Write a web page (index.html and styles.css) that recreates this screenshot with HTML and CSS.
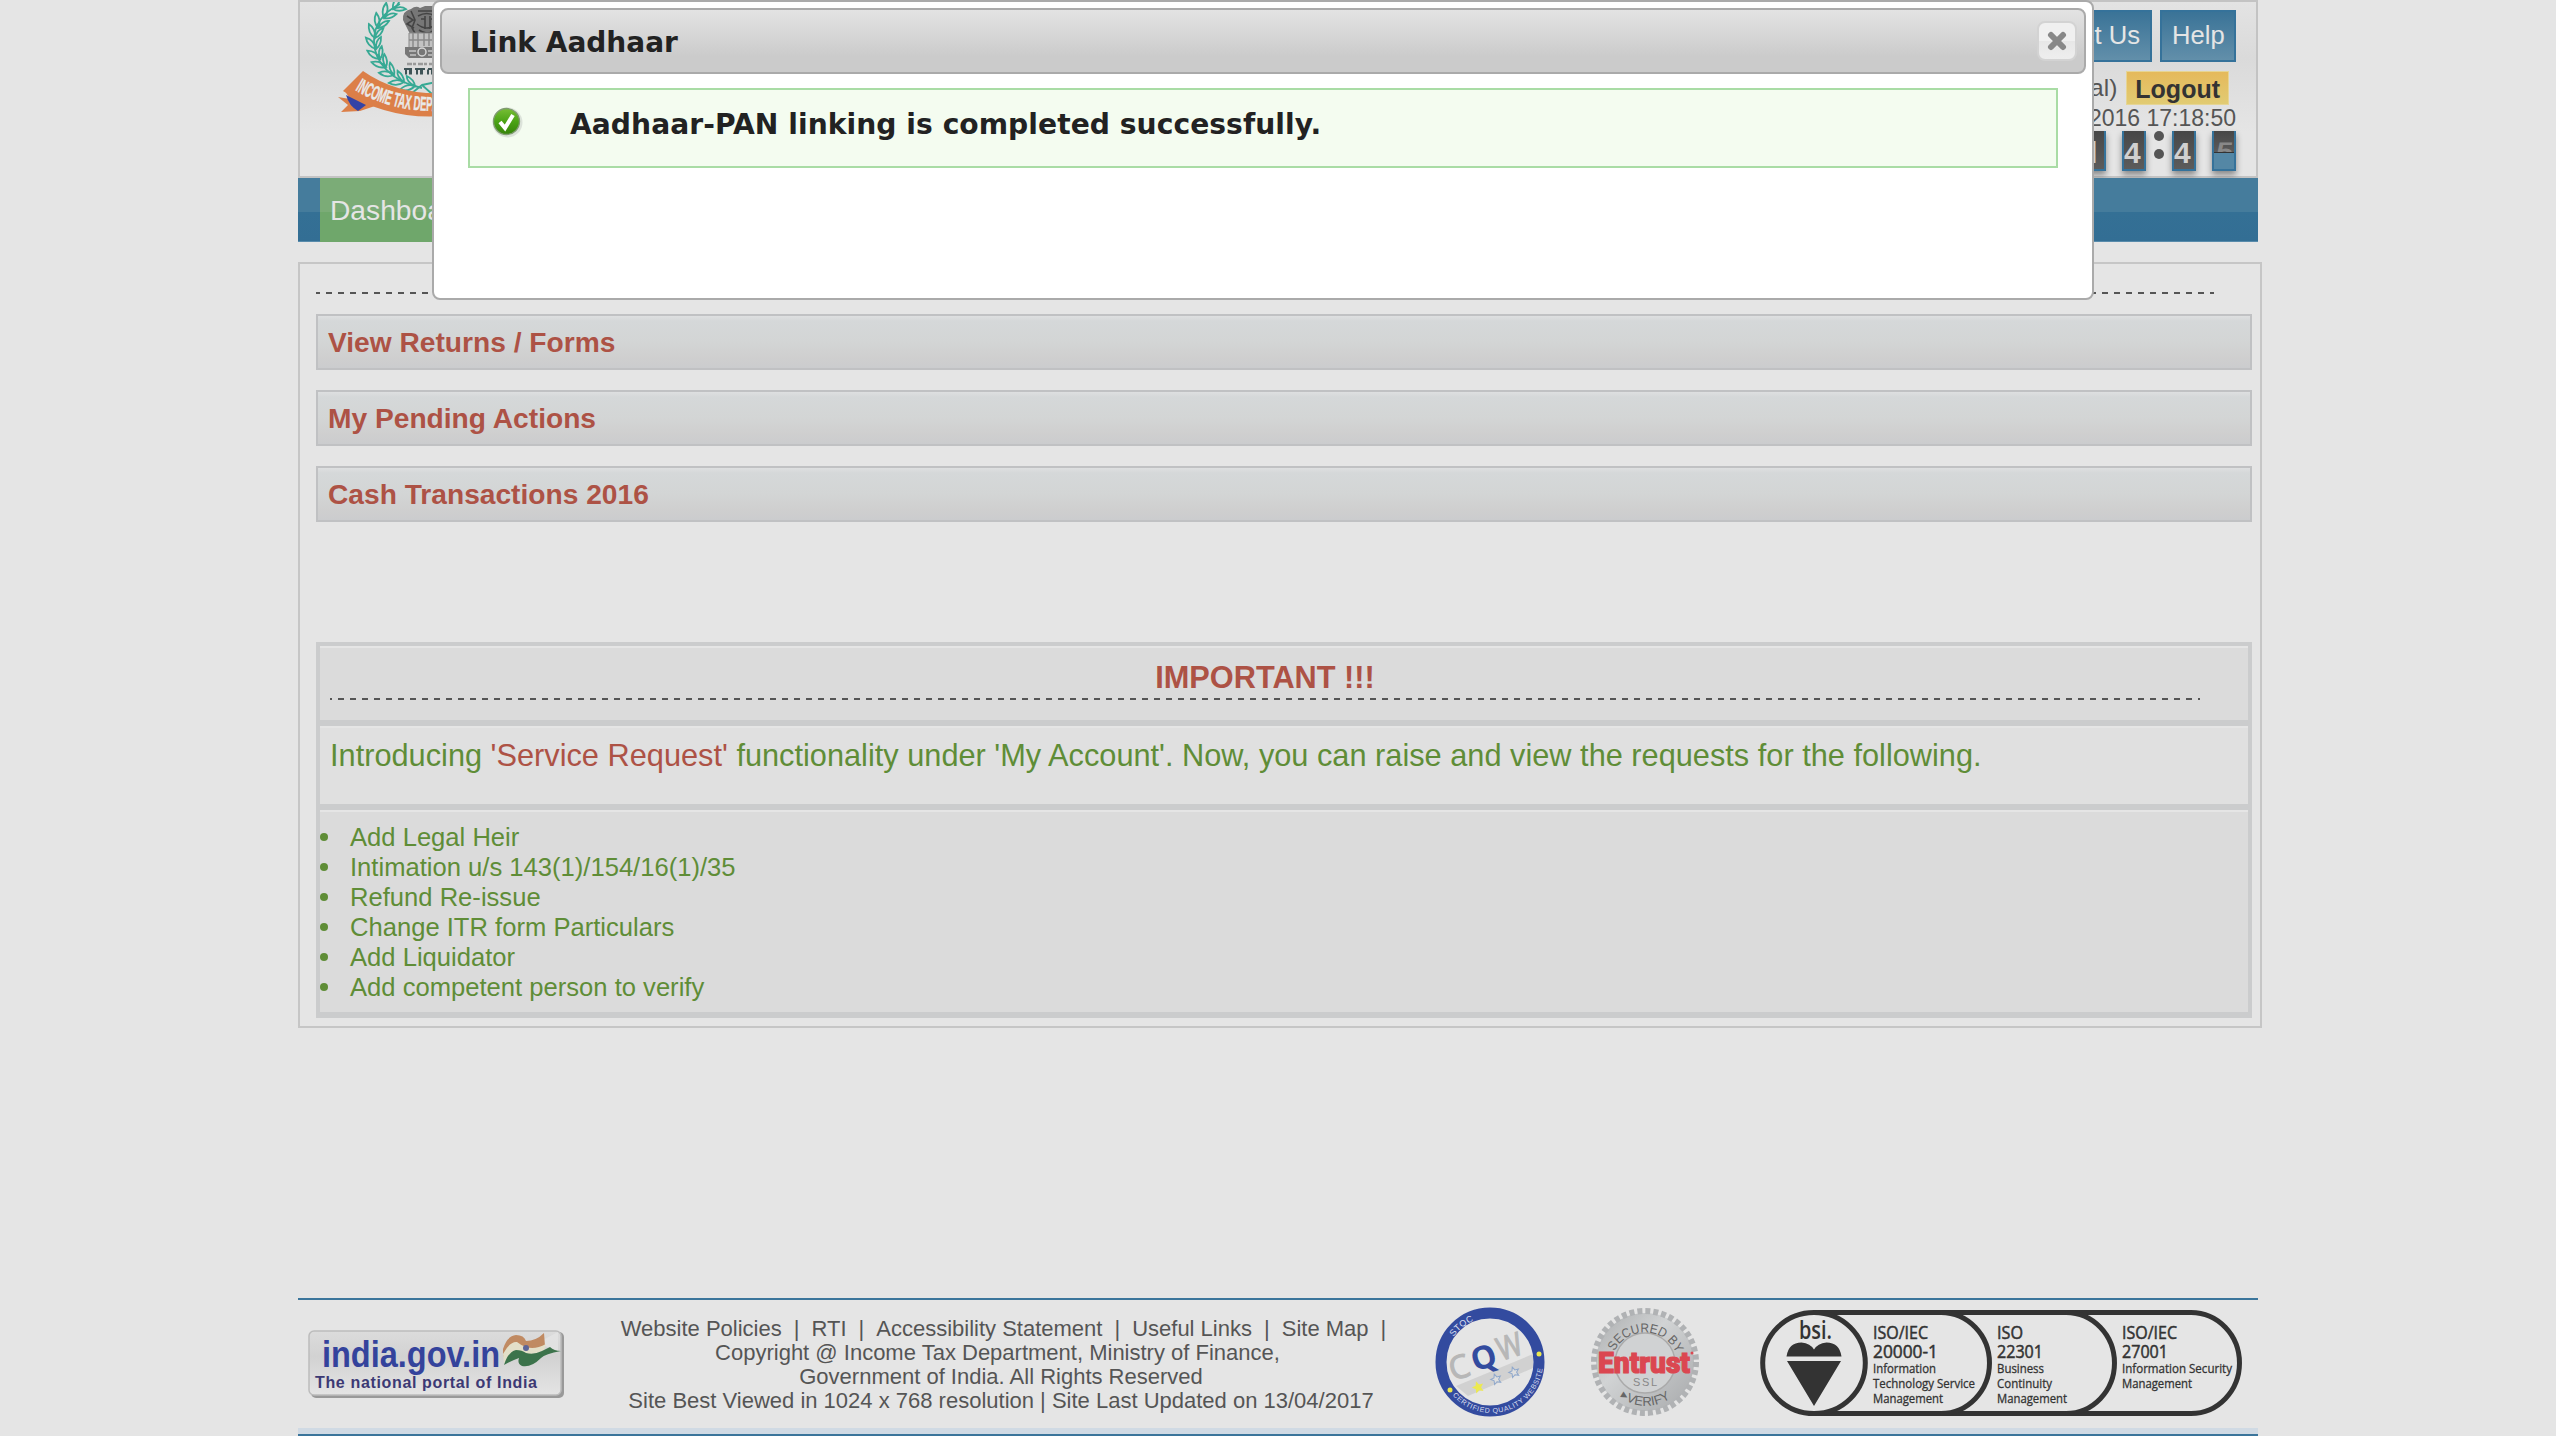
FILE: index.html
```html
<!DOCTYPE html>
<html lang="en">
<head>
<meta charset="utf-8">
<title>Link Aadhaar</title>
<link rel="stylesheet" href="styles.css">
</head>
<body>
<div class="page">
  <header class="header">
    <svg class="emblem" width="190" height="120" viewBox="0 0 190 120">
      <defs>
        <path id="ribbon-text" d="M17 88Q52 109 96 109Q125 109 155 101"/>
        <g id="leaf"><path d="M0 0Q-8 -4 -8 -13Q0 -9 0 0ZM0 0Q6 -3 7 -11Q1 -9 0 0Z"/></g>
      </defs>
      <g class="wreath">
        <path d="M84 86C54 80 36 60 36 39C36 21 46 10 62 2"/>
        <use href="#leaf" transform="translate(77 84) rotate(-72)"/>
        <use href="#leaf" transform="translate(66 80) rotate(-62)"/>
        <use href="#leaf" transform="translate(56 73) rotate(-50)"/>
        <use href="#leaf" transform="translate(48 65) rotate(-40)"/>
        <use href="#leaf" transform="translate(42 57) rotate(-25)"/>
        <use href="#leaf" transform="translate(38 47) rotate(-10)"/>
        <use href="#leaf" transform="translate(37 36) rotate(8)"/>
        <use href="#leaf" transform="translate(40 26) rotate(25)"/>
        <use href="#leaf" transform="translate(46 16) rotate(40)"/>
        <use href="#leaf" transform="translate(55 7) rotate(58)"/>
        <path d="M74 91L84 83L94 92M84 83L108 78"/>
      </g>
      <g class="lions">
        <path fill="#777" d="M73 7q5-4 9-1l5-2h7l5 2q8-1 10 5v8l-4 12-6 5H75l-4-6-6-12q-1-9 8-11z"/>
        <path fill="none" stroke="#444" stroke-width="1.6" d="M73 9l4 9-3 8 4 7M80 9h17M80 14q9-5 17 0M83 17h4m6 0h4M79 22q10 8 19 0M81 28q8 6 15 0M87 14v13M92 14v13M102 10l-4 10 4 10M69 14l6 4-6 4 7 4"/>
        <path fill="#c2c2c2" stroke="#888" d="M71 31h32v15H71z"/>
        <path fill="none" stroke="#8a8a8a" stroke-width="1.5" d="M75 31v14m5-14v14m6-14v13m5-13v13m5-13v14M71 38h32"/>
        <path fill="#777" d="M67 45h40l-1 11H71l-4-4z"/>
        <circle cx="84" cy="50" r="4" fill="none" stroke="#d5d5d5" stroke-width="1.5"/>
        <path stroke="#c5c5c5" stroke-width="1.5" d="M71 49h7m12 0h9M72 53h6m12 0h8"/>
        <path stroke="#999" stroke-width="2.500" stroke-dasharray="5 1 3 2" d="M69 62h36"/>
        <path stroke="#3f5356" stroke-width="2" stroke-dasharray="8 3 10 3" d="M66 67h40"/>
        <path stroke="#3f5356" stroke-width="5" stroke-dasharray="2 2 3 4" d="M67 70h40"/>
      </g>
      <path fill="#dc7f48" d="M0 95l12 2-5-8 33 14-18 6-19 1 7-7z"/>
      <path fill="#3443a5" d="M8 93l20 10-8 6q-9-5-12-16z"/>
      <path fill="#dc7f48" d="M5 89L25 69Q75 104 150 84L155 104Q70 131 5 89z"/>
      <text class="ribbon-label"><textPath href="#ribbon-text" textLength="108" lengthAdjust="spacingAndGlyphs">INCOME TAX DEPARTM</textPath></text>
    </svg>
    <div class="account">
      <div class="top-links"><a class="top-link">Contact Us</a><a class="top-link help">Help</a></div>
      <div class="user-line"><span>(Individual)</span><a class="logout">Logout</a></div>
      <div class="timestamp">2016 17:18:50</div>
      <svg class="countdown" width="160" height="50" viewBox="0 0 160 50">
        <defs>
          <linearGradient id="flap" x1="0" y1="0" x2="0" y2="1"><stop offset="0" stop-color="#474747"/><stop offset="1" stop-color="#5c5c5c"/></linearGradient>
        </defs>
        <g class="flap"><rect x="1" y="1" width="24" height="40"/><rect x="41" y="1" width="24" height="40"/><rect x="91" y="1" width="24" height="40"/><rect x="131" y="1" width="24" height="40"/></g>
        <g fill="url(#flap)"><rect x="3" y="1" width="20" height="38"/><rect x="43" y="1" width="20" height="38"/><rect x="93" y="1" width="20" height="38"/><rect x="133" y="1" width="20" height="22"/></g>
        <path fill="#5487a5" d="M133 23h20v16h-20z"/>
        <path stroke="#333" d="M133 22.5h20"/>
        <g fill="#555"><circle cx="78" cy="6" r="5"/><circle cx="78" cy="24" r="5"/></g>
        <g class="digits"><text class="digit-one" x="2" y="33">1</text><text x="43" y="33">4</text><text x="93" y="33">4</text></g>
        <svg x="131" y="1" width="24" height="21"><text class="digit-flip" transform="translate(3 29) skewX(-8) scale(1 .85)">5</text></svg>
      </svg>
    </div>
  </header>
  <nav class="nav"><a class="nav-item">Dashboard</a></nav>

  <main class="panel">
    <div class="dashes"></div>
    <section class="bar">View Returns / Forms</section>
    <section class="bar">My Pending Actions</section>
    <section class="bar">Cash Transactions 2016</section>
    <div class="notice">
      <div class="notice-row notice-head"><h2>IMPORTANT !!!</h2><div class="dashes"></div></div>
      <div class="notice-row notice-intro">Introducing <span class="hot">'Service Request'</span> functionality under 'My Account'. Now, you can raise and view the requests for the following.</div>
      <ul class="notice-row notice-list">
        <li>Add Legal Heir</li>
        <li>Intimation u/s 143(1)/154/16(1)/35</li>
        <li>Refund Re-issue</li>
        <li>Change ITR form Particulars</li>
        <li>Add Liquidator</li>
        <li>Add competent person to verify</li>
      </ul>
    </div>
  </main>

  <footer class="footer">
    <svg class="portal" width="258" height="70" viewBox="0 0 258 70">
      <defs><linearGradient id="plate" x1="0" y1="0" x2="0" y2="1"><stop offset="0" stop-color="#dcdcdc"/><stop offset=".4" stop-color="#d2d2d2"/><stop offset="1" stop-color="#e4e4e4"/></linearGradient></defs>
      <rect x="4" y="3" width="253" height="66" rx="5" fill="#999"/>
      <rect x="2" y="2" width="252" height="64" rx="5" fill="url(#plate)" stroke="#bcbcbc" stroke-width="1.5"/>
      <path fill="#e6e6e6" d="M230 14L251 3V22z" opacity=".7"/>
      <path fill="#c08a62" d="M196 20q4-13 13-14q8 0 10 6q10 0 18-8l1 13q-11 6-21 3q-7-5-12-2q-4 3-9 10z"/>
      <path fill="#e3dfc8" d="M196 25q7-13 14-12q5 4 9 5q9 3 20-3l-2 6q-12 6-20 3q-8-3-20 10z"/>
      <path fill="#3c734b" d="M197 36q4-13 12-15q6 0 10 3q8 2 16-2l8-4q4 4 11 4q-16 3-20 7q-10 10-19 8q-5-2-3-8q-6 2-15 7z"/>
      <circle cx="219" cy="19" r="3" fill="#5c6599"/>
      <text class="portal-name" x="15" y="38" textLength="178" lengthAdjust="spacingAndGlyphs">india.gov.in</text>
      <text class="portal-tag" x="8" y="59" textLength="222" lengthAdjust="spacing">The national portal of India</text>
    </svg>
    <div class="legal">
      <div class="legal-links"><a>Website Policies</a><i>|</i><a>RTI</a><i>|</i><a>Accessibility Statement</a><i>|</i><a>Useful Links</a><i>|</i><a>Site Map</a><i>|</i></div>
      <div class="legal-copy">Copyright @ Income Tax Department, Ministry of Finance,</div>
      <div>Government of India. All Rights Reserved</div>
      <div>Site Best Viewed in 1024 x 768 resolution | Site Last Updated on 13/04/2017</div>
    </div>
    <svg class="cqw" width="112" height="112" viewBox="0 0 112 112">
      <defs>
        <path id="cqw-top" d="M11.500 50A46.500 46.500 0 0 1 96 32"/>
        <path id="cqw-bottom" d="M16 86A51.500 51.500 0 0 0 109 54"/>
        <path id="star" d="M0-6l1.800 4 4.200.4-3.200 2.900 1 4.300L0 3.400-3.800 5.600l1-4.300L-6-1.600l4.200-.4z"/>
      </defs>
      <circle cx="56" cy="56" r="49" fill="#e5e5e5" stroke="#334b9f" stroke-width="11"/>
      <path d="M22 80L99 48v14L34 90z" fill="#d1d1d1"/>
      <g class="cqw-letters"><text transform="translate(19 75) rotate(-18)" fill="#b7b7b7">C</text><text transform="translate(41 66) rotate(-18)" fill="#334b9f" class="cqw-q">Q</text><text transform="translate(67 55) rotate(-18)" fill="#b7b7b7" textLength="25" lengthAdjust="spacingAndGlyphs">W</text></g>
      <use href="#star" transform="translate(44 81) rotate(-20)" fill="#ece94f"/>
      <g fill="#dedede" stroke="#8fa8cc" stroke-width="1.200"><use href="#star" transform="translate(62 73) rotate(-20) scale(.85)"/><use href="#star" transform="translate(80 66) rotate(-20) scale(.85)"/></g>
      <circle cx="16" cy="84" r="2.500" fill="#ece94f"/><circle cx="105" cy="48" r="2.500" fill="#ece94f"/>
      <text class="ring"><textPath href="#cqw-top" startOffset="21" textLength="26">STQC</textPath></text>
      <text class="ring ring-small"><textPath href="#cqw-bottom" startOffset="4" textLength="118">CERTIFIED QUALITY WEBSITE</textPath></text>
    </svg>
    <svg class="entrust" width="112" height="112" viewBox="0 0 112 112">
      <defs>
        <linearGradient id="silver" x1="0" y1="0" x2="1" y2="1"><stop offset="0" stop-color="#aaacae"/><stop offset=".4" stop-color="#d1d3d4"/><stop offset="1" stop-color="#a7a9ab"/></linearGradient>
        <path id="ent-top" d="M24 49A34 34 0 0 1 88 49"/>
        <path id="ent-bottom" d="M27 88A44 44 0 0 0 87 88"/>
      </defs>
      <circle cx="56" cy="56" r="49" fill="url(#silver)"/>
      <circle cx="56" cy="56" r="51" fill="none" stroke="#b0b2b4" stroke-width="6" stroke-dasharray="5 3.010"/>
      <circle cx="56" cy="57" r="30" fill="#d0d2d3" stroke="#aaa" stroke-width="1.500"/>
      <text class="seal"><textPath href="#ent-top" startOffset="4" textLength="77" lengthAdjust="spacingAndGlyphs">SECURED BY</textPath></text>
      <text class="seal"><textPath href="#ent-bottom" startOffset="5" textLength="54" lengthAdjust="spacingAndGlyphs">▸VERIFY</textPath></text>
      <text class="ent-name" x="9" y="67" textLength="92" lengthAdjust="spacingAndGlyphs">Entrust</text>
      <text class="ent-ssl" x="44" y="80" textLength="24">SSL</text>
      <circle cx="103" cy="47" r="1.500" fill="#db4751"/>
    </svg>
    <svg class="bsi" width="488" height="116" viewBox="0 0 488 116">
      <g fill="none" stroke="#333" stroke-width="5">
        <path d="M57 5.500H434A48.500 50.500 0 0 1 434 106.500H57"/>
        <ellipse cx="57" cy="56" rx="51.300" ry="50.500"/>
        <path d="M184 5.500A48.500 50.500 0 0 1 184 106.500M309 5.500A48.500 50.500 0 0 1 309 106.500"/>
      </g>
      <path fill="#333" d="M29.500 49.500q2-14 15-14q9 1 12.500 7q3.500-6 12.500-7q13 0 15 14zM30 54h54L57 99z"/>
      <text class="bsi-name" x="42" y="32" textLength="33" lengthAdjust="spacingAndGlyphs">bsi.</text>
      <g class="iso">
        <text x="116" y="32" textLength="55" lengthAdjust="spacingAndGlyphs">ISO/IEC</text><text x="116" y="51" textLength="65" lengthAdjust="spacingAndGlyphs">20000-1</text>
        <text x="240" y="32" textLength="26" lengthAdjust="spacingAndGlyphs">ISO</text><text x="240" y="51" textLength="46" lengthAdjust="spacingAndGlyphs">22301</text>
        <text x="365" y="32" textLength="55" lengthAdjust="spacingAndGlyphs">ISO/IEC</text><text x="365" y="51" textLength="46" lengthAdjust="spacingAndGlyphs">27001</text>
      </g>
      <g class="iso-sub">
        <text x="116" y="66" textLength="63" lengthAdjust="spacingAndGlyphs">Information</text><text x="116" y="81" textLength="102" lengthAdjust="spacingAndGlyphs">Technology Service</text><text x="116" y="96" textLength="70" lengthAdjust="spacingAndGlyphs">Management</text>
        <text x="240" y="66" textLength="47" lengthAdjust="spacingAndGlyphs">Business</text><text x="240" y="81" textLength="55" lengthAdjust="spacingAndGlyphs">Continuity</text><text x="240" y="96" textLength="70" lengthAdjust="spacingAndGlyphs">Management</text>
        <text x="365" y="66" textLength="110" lengthAdjust="spacingAndGlyphs">Information Security</text><text x="365" y="81" textLength="70" lengthAdjust="spacingAndGlyphs">Management</text>
      </g>
    </svg>
  </footer>
</div>

<div class="dialog" role="dialog">
  <div class="dialog-title"><span>Link Aadhaar</span>
    <button class="close" aria-label="Close"><svg width="20" height="20" viewBox="0 0 20 20"><path d="M4 4L16 16M16 4L4 16" stroke="#888" stroke-width="6" stroke-linecap="round"/></svg></button>
  </div>
  <div class="success">
    <svg width="32" height="32" viewBox="0 0 32 32">
      <defs><linearGradient id="ball" x1="0" y1="0" x2="0" y2="1"><stop offset="0" stop-color="#77be35"/><stop offset=".5" stop-color="#4ba315"/><stop offset="1" stop-color="#358309"/></linearGradient></defs>
      <circle cx="16.500" cy="16.500" r="15" fill="#dce3da"/><circle cx="15.500" cy="15.500" r="13" fill="url(#ball)" stroke="#7f9b70" stroke-width="1.300"/>
      <path d="M9 16l5 6 8-13" fill="none" stroke="#fff" stroke-width="4"/>
    </svg>
    <p>Aadhaar-PAN linking is completed successfully.</p>
  </div>
</div>
</body>
</html>
```

FILE: styles.css
```css
* { box-sizing: border-box; }
body { margin: 0; background: #e5e5e5; color: #555; font-family: "Liberation Sans", Arial, sans-serif; overflow: hidden; }
.page { width: 1964px; height: 1436px; margin-left: 298px; display: flex; flex-direction: column; }

.header { width: 1960px; height: 178px; border: 2px solid #c3c3c3; background: linear-gradient(#e3e3e3, #dadada 32%, #e5e5e5 75%); display: flex; justify-content: space-between; padding-left: 38px; padding-right: 20px; }
.account { display: flex; flex-direction: column; align-items: flex-end; }
.top-links { display: flex; gap: 8px; margin-top: 8px; }
.top-link { height: 52px; padding: 0 10px; border: 2px solid #35729a; background: linear-gradient(#3a7397, #628faa); color: #e5e5e5; font-size: 25.6px; line-height: 47px; }
.help { width: 76px; }
.user-line { display: flex; align-items: center; gap: 9px; margin-top: 9px; padding-right: 7px; height: 34px; font-size: 24.5px; line-height: 32px; }
.logout { height: 34px; padding: 0 8px; border: 1px solid #e6d594; background: linear-gradient(#e5b95b, #e1cb73); color: #333; font-weight: bold; font-size: 25px; line-height: 34px; }
.timestamp { font-size: 23px; line-height: 26px; height: 25px; }
.countdown { margin-right: -5px; flex: none; overflow: visible; }
.flap { fill: #35729a; filter: drop-shadow(0 4px 3px rgba(0, 0, 0, .4)); }
.digits text, .digit-flip { font: bold 30px "Liberation Sans", sans-serif; fill: #d0d0d0; }
.digits .digit-one { font-family: "Open Sans", sans-serif; }
.digit-flip { fill: #888; }

.wreath { fill: none; stroke: #37a994; stroke-width: 1.8px; }
.ribbon-label { font: bold 20px "Liberation Sans", sans-serif; fill: #e9e9e9; stroke: #e9e9e9; stroke-width: .4px; }

.nav { width: 1960px; height: 64px; background: linear-gradient(#457c9c 34px, #347095 34px, #336e94 63px, #588bab 63px); padding-left: 22px; display: flex; }
.nav-item { width: 170px; padding-left: 10px; background: linear-gradient(#7bac77 34px, #6fa76b 34px); color: #e5e5e5; font-size: 28.2px; line-height: 64px; }

.panel { height: 766px; margin-top: 20px; border: 2px solid #c6c6c6; padding: 28px 8px 0 16px; }
.dashes { width: 1898px; height: 2px; background: repeating-linear-gradient(90deg, #555 0 4px, transparent 4px 10px, #555 10px 12px); }
.bar { height: 56px; margin-bottom: 20px; padding-left: 10px; border: 2px solid #c0c1c3; background: linear-gradient(#dedfe0, #d5d8d9 5px, #d3d5d5 50%, #cfcfcf 80%, #cbccce); color: #ad5245; font-weight: bold; font-size: 28.16px; line-height: 54px; }
.panel > .dashes + .bar { margin-top: 20px; }

.notice { margin-top: 120px; border: 4px solid #cbcccd; border-bottom-width: 6px; background: #cbcccd; display: flex; flex-direction: column; gap: 6px; }
.notice-row { background: #dbdbdb; border-top: 2px solid #e5e5e5; }
.notice-head { height: 74px; padding-left: 10px; }
.notice-head h2 { margin: 0; padding: 13px 0 0; width: 1870px; text-align: center; color: #ad5245; font-size: 30.72px; line-height: 34px; height: 50px; }
.notice-head .dashes { width: 1870px; background: repeating-linear-gradient(90deg, #555 0 2px, transparent 2px 8px, #555 8px 12px); }
.notice-intro { height: 78px; padding: 10px; background: #e0e0e0; color: #5f8d37; font-size: 30.74px; line-height: 36px; }
.hot { color: #ad5245; }
.notice-list { height: 202px; margin: 0; padding: 10px 0 0; list-style: none; color: #5f8d37; font-size: 25.6px; line-height: 30px; }
.notice-list li { display: flex; align-items: center; height: 30px; }
.notice-list li::before { content: ""; width: 8px; height: 8px; margin-right: 22px; border-radius: 50%; background: #5f8d37; }

.footer { width: 1960px; height: 138px; margin-top: auto; border-top: 2px solid #3b759b; border-bottom: 2px solid #3b759b; box-shadow: inset 0 -6px #d0dae4; display: flex; align-items: flex-start; }
.portal { margin: 29px 0 0 9px; flex: none; }
.portal-name { font: bold 36px "Liberation Sans", sans-serif; fill: #34439c; }
.portal-tag { font: bold 16px "Liberation Sans", sans-serif; fill: #3c3974; }
.legal { width: 774px; margin: 17px 0 0 49px; text-align: center; font-size: 22px; line-height: 24px; white-space: nowrap; flex: none; }
.legal-links { display: flex; justify-content: center; gap: 12px; padding-left: 5px; }
.legal-links i { font-style: normal; }
.legal-copy { padding-right: 7px; }
.cqw { margin: 6px 0 0 46px; flex: none; }
.cqw-letters { font: 32px "Open Sans", sans-serif; stroke: #b7b7b7; stroke-width: 1.2px; }
.cqw-q { font-weight: bold; stroke: none; }
.ring { font: 9px "Liberation Sans", sans-serif; fill: #d8def0; }
.ring-small { font-size: 7px; }
.entrust { margin: 6px 0 0 43px; flex: none; }
.seal { font: 13px "Liberation Sans", sans-serif; fill: #666; }
.ent-name { font: 900 29px Roboto, sans-serif; fill: #db4751; stroke: #db4751; stroke-width: 1.2px; }
.ent-ssl { font: 11px "Liberation Sans", sans-serif; fill: #888; }
.bsi { margin: 7px 0 0 56px; flex: none; }
.bsi-name { font: 600 25px "Open Sans", sans-serif; fill: #333; }
.iso { font: 17.5px "Open Sans", sans-serif; fill: #333; stroke: #333; stroke-width: .5px; }
.iso-sub { font: 12.5px "Open Sans", sans-serif; fill: #333; stroke: #333; stroke-width: .3px; }

.dialog { position: absolute; left: 432px; top: 0; width: 1662px; height: 300px; padding: 6px; border: 2px solid #aaa; border-radius: 8px; background: #fff; color: #222; font-family: "DejaVu Sans", Verdana, sans-serif; font-weight: bold; }
.dialog-title { height: 66px; padding: 0 7px 0 28px; border: 2px solid #aaa; border-radius: 8px; background: linear-gradient(#e3e3e3, #cbcbcb 75%); display: flex; align-items: center; justify-content: space-between; font-size: 28px; }
.dialog-title span { padding-top: 3px; }
.close { width: 40px; height: 40px; padding: 0; border: 2px solid #d3d3d3; border-radius: 8px; background: linear-gradient(#f0f0f0 50%, #e7e7e7 50%, #eee); display: flex; align-items: center; justify-content: center; }
.success { width: 1590px; height: 80px; margin: 14px 0 0 28px; padding: 16px 0 0 21px; border: 2px solid #a9dca5; background: #f4fcf0; display: flex; font-size: 28.16px; }
.success svg { flex: none; }
.success p { margin: 1px 0 0 47px; line-height: 36px; letter-spacing: .04px; }
```
